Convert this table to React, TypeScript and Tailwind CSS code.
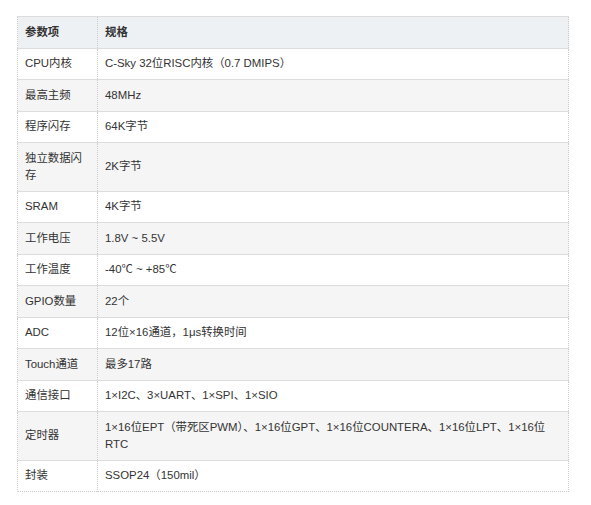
const rows: [string, string][] = [
  ["CPU内核", "C-Sky 32位RISC内核（0.7 DMIPS）"],
  ["最高主频", "48MHz"],
  ["程序闪存", "64K字节"],
  ["独立数据闪存", "2K字节"],
  ["SRAM", "4K字节"],
  ["工作电压", "1.8V ~ 5.5V"],
  ["工作温度", "-40℃ ~ +85℃"],
  ["GPIO数量", "22个"],
  ["ADC", "12位×16通道，1μs转换时间"],
  ["Touch通道", "最多17路"],
  ["通信接口", "1×I2C、3×UART、1×SPI、1×SIO"],
  [
    "定时器",
    "1×16位EPT（带死区PWM）、1×16位GPT、1×16位COUNTERA、1×16位LPT、1×16位RTC",
  ],
  ["封装", "SSOP24（150mil）"],
];

export default function App() {
  return (
    <div className="min-h-screen bg-white pt-4 pl-[17px]">
      <table className="w-[552px] border-collapse border border-dotted border-[#ccc] font-['Liberation_Sans','Noto_Sans_CJK_SC',sans-serif] text-[11.4px] leading-[17px] text-[#333]">
        <thead>
          <tr className="border-t border-b border-solid border-[#ddd] bg-[#eef1f4] font-bold">
            <th className="w-[80px] border-r border-dotted border-[#ccc] px-[7px] py-[6.75px] text-left font-bold">
              参数项
            </th>
            <th className="px-[7px] py-[6.75px] text-left font-bold">规格</th>
          </tr>
        </thead>
        <tbody>
          {rows.map(([k, v], i) => (
            <tr
              key={k}
              className={
                (i % 2 === 1 ? "bg-[#f5f5f5] " : "bg-white ") +
                (i === rows.length - 1 ? "" : "border-b border-solid border-[#ddd]")
              }
            >
              <td className="w-[80px] border-r border-dotted border-[#ccc] px-[7px] py-[6.75px] align-middle">
                {k}
              </td>
              <td className="px-[7px] py-[6.75px] align-middle">{v}</td>
            </tr>
          ))}
        </tbody>
      </table>
    </div>
  );
}
